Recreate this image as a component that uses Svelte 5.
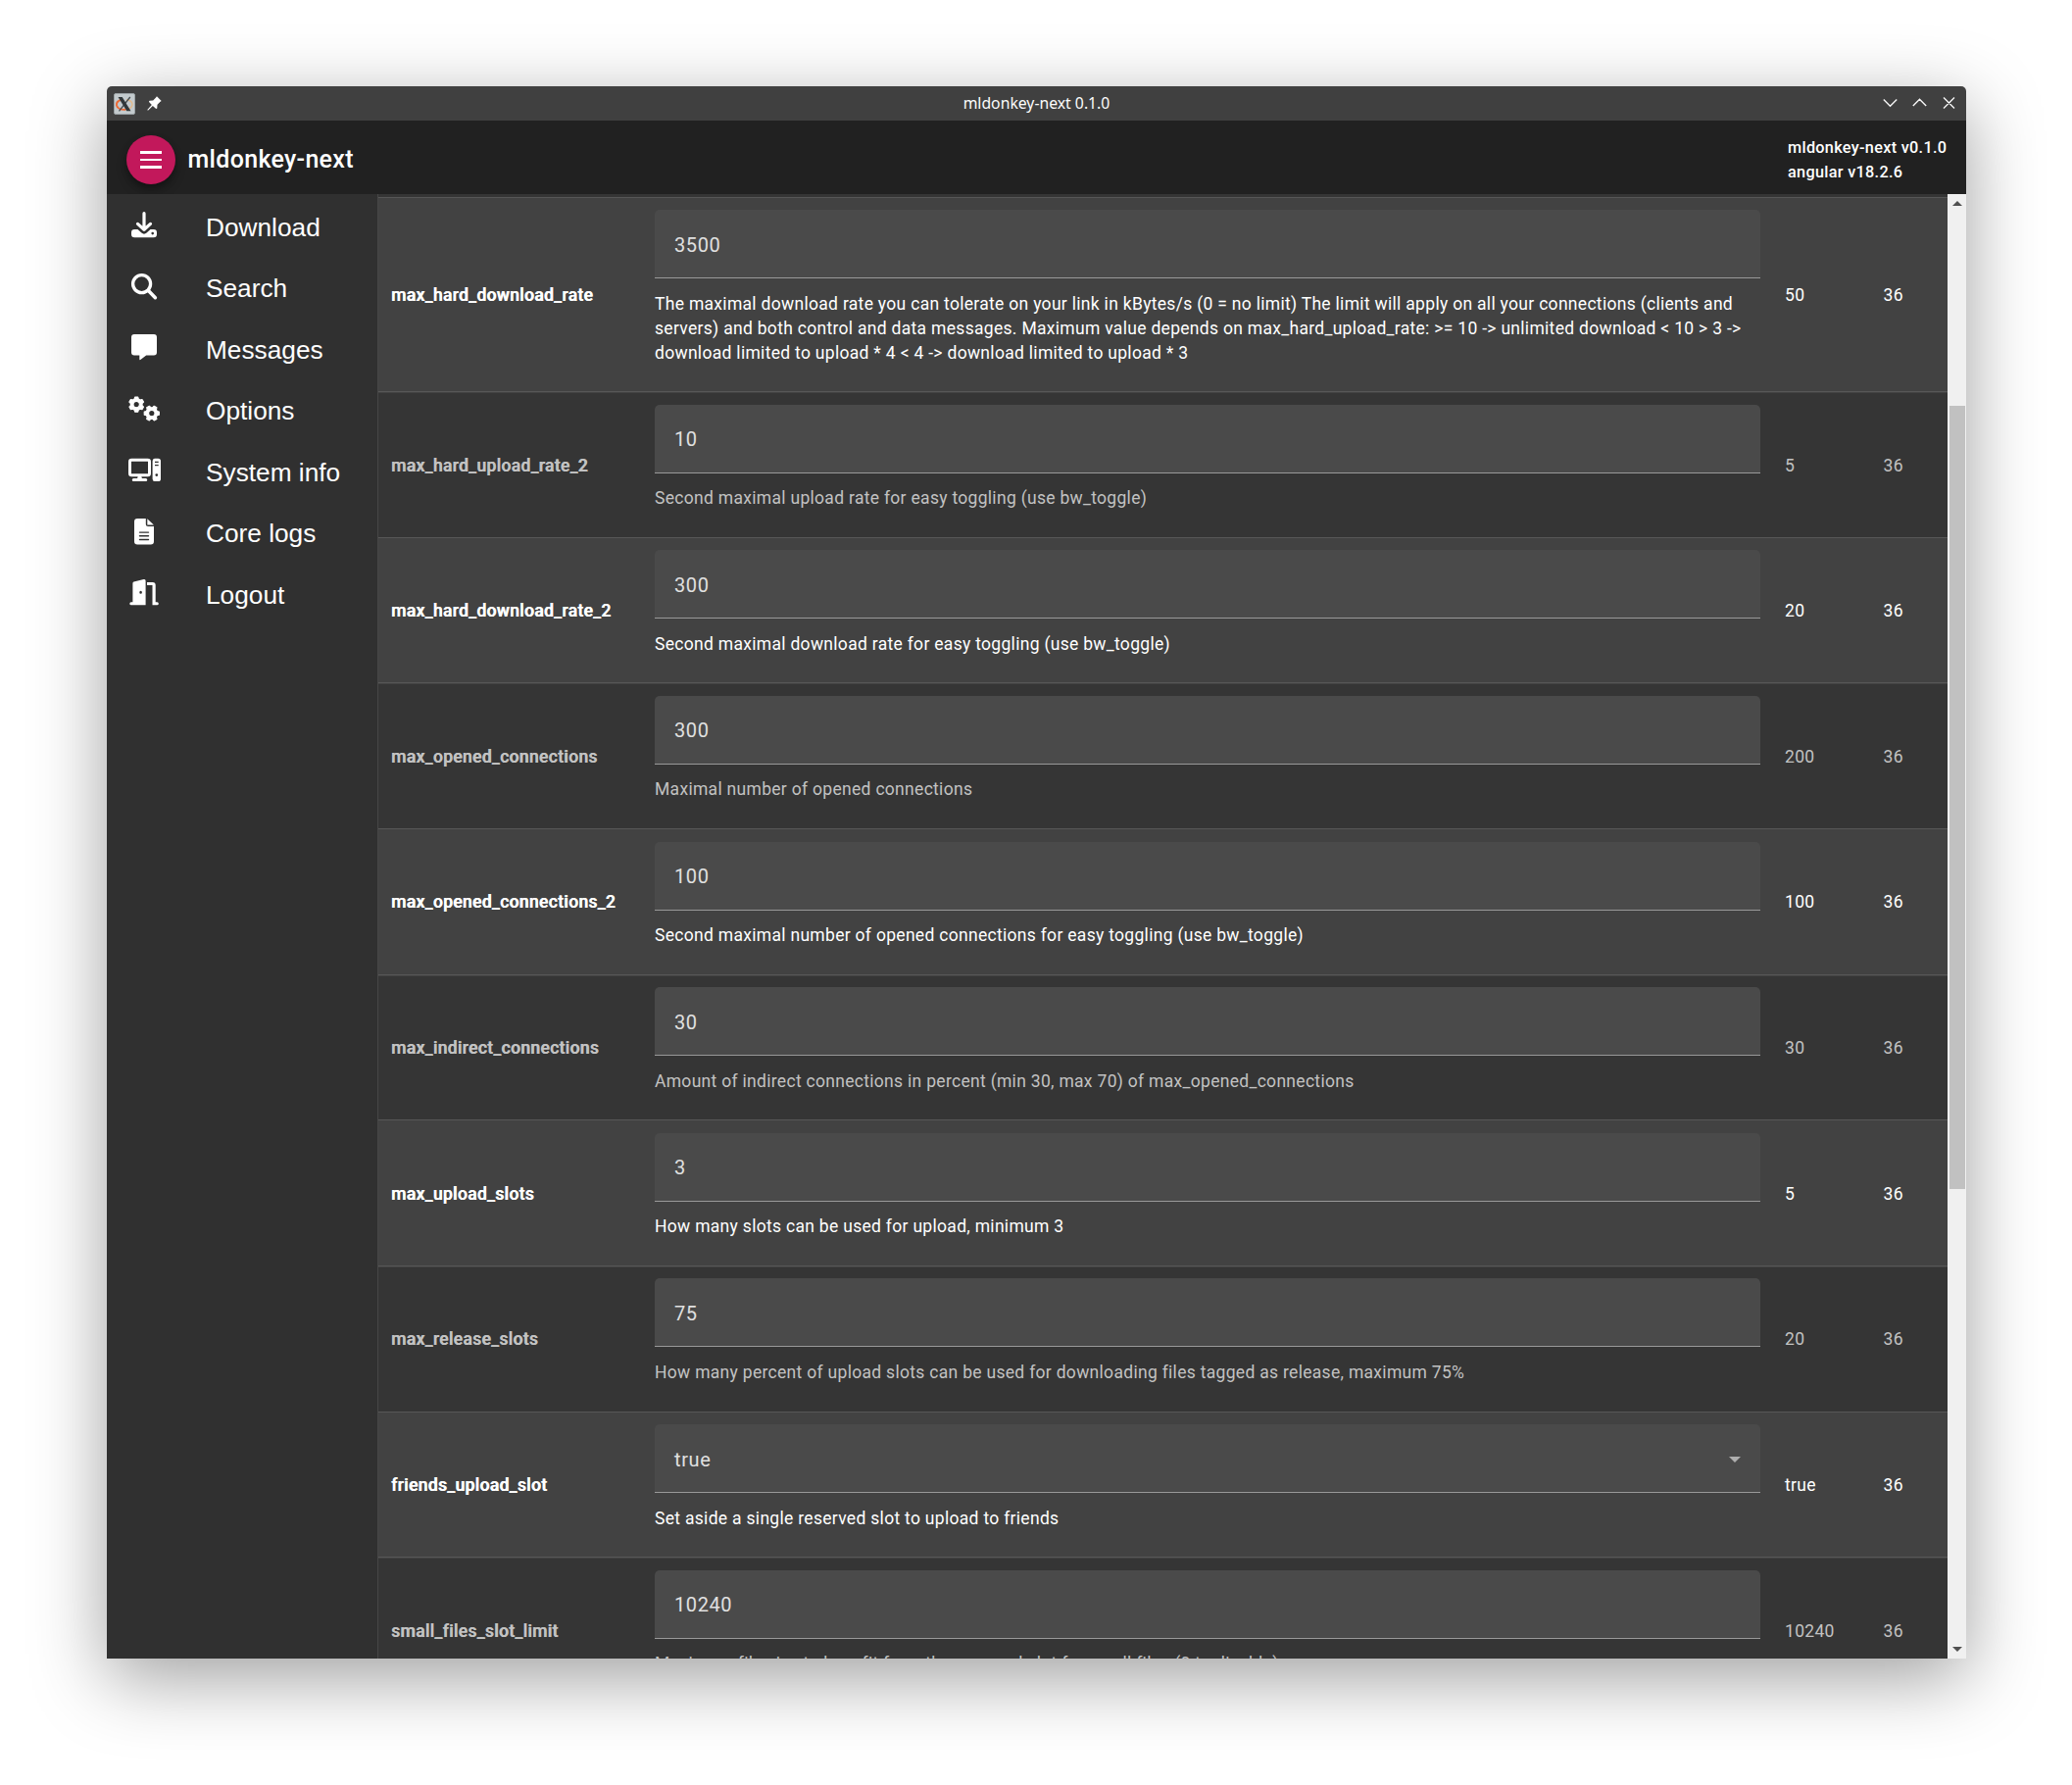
<script>
  const nav = [
    { id: 'download', label: 'Download' },
    { id: 'search', label: 'Search' },
    { id: 'messages', label: 'Messages' },
    { id: 'options', label: 'Options' },
    { id: 'system', label: 'System info' },
    { id: 'logs', label: 'Core logs' },
    { id: 'logout', label: 'Logout' },
  ];

  const options = [
    {
      name: 'max_hard_download_rate',
      value: '3500',
      lines: [
        'The maximal download rate you can tolerate on your link in kBytes/s (0 = no limit) The limit will apply on all your connections (clients and',
        'servers) and both control and data messages. Maximum value depends on max_hard_upload_rate: >= 10 -> unlimited download < 10 > 3 ->',
        'download limited to upload * 4 < 4 -> download limited to upload * 3',
      ],
      initial: '50',
    },
    { name: 'max_hard_upload_rate_2', value: '10', lines: ['Second maximal upload rate for easy toggling (use bw_toggle)'], initial: '5' },
    { name: 'max_hard_download_rate_2', value: '300', lines: ['Second maximal download rate for easy toggling (use bw_toggle)'], initial: '20' },
    { name: 'max_opened_connections', value: '300', lines: ['Maximal number of opened connections'], initial: '200' },
    { name: 'max_opened_connections_2', value: '100', lines: ['Second maximal number of opened connections for easy toggling (use bw_toggle)'], initial: '100' },
    { name: 'max_indirect_connections', value: '30', lines: ['Amount of indirect connections in percent (min 30, max 70) of max_opened_connections'], initial: '30' },
    { name: 'max_upload_slots', value: '3', lines: ['How many slots can be used for upload, minimum 3'], initial: '5' },
    { name: 'max_release_slots', value: '75', lines: ['How many percent of upload slots can be used for downloading files tagged as release, maximum 75%'], initial: '20' },
    { name: 'friends_upload_slot', value: 'true', select: true, lines: ['Set aside a single reserved slot to upload to friends'], initial: 'true' },
    { name: 'small_files_slot_limit', value: '10240', lines: ['Maximum file size to benefit from the reserved slot for small files (0 to disable)'], initial: '10240' },
  ];

  // Outline of a six-toothed cog centred on (cx, cy), as SVG path points.
  function cog(cx, cy, turn) {
    const pts = [];
    for (let i = 0; i < 6; i++) {
      const a = turn + (i * Math.PI) / 3;
      for (const [d, r] of [[-0.36, 5.9], [-0.2, 7.7], [0.2, 7.7], [0.36, 5.9]]) {
        pts.push(`${(cx + r * Math.cos(a + d)).toFixed(2)} ${(cy + r * Math.sin(a + d)).toFixed(2)}`);
      }
    }
    return `M${pts.join('L')}Z`;
  }
  const ring = (cx, cy, r) => `M${cx - r} ${cy}a${r} ${r} 0 1 0 ${2 * r} 0a${r} ${r} 0 1 0 ${-2 * r} 0Z`;
</script>

<div class="desktop">
  <div class="window">
    <div class="titlebar">
      <div class="tb-left">
        <svg class="xlogo" viewBox="0 0 22 22">
          <rect x=".5" y=".5" width="21" height="21" rx="1.5" fill="#c3cacd" stroke="#9aa1a4" />
          <path d="M8.5 6.5C4.500 7.500 2.500 10 3 12.500c.7 3 4.500 4.700 9 4.300" fill="none" stroke="#ec6a35" stroke-width="2" />
          <path d="M12 16.800c4.500-.5 7.500-2.800 7-5.800-.4-2.600-3-4-6-4.300" fill="none" stroke="#e3b98a" stroke-width="1.400" />
          <path d="M16.800 4 5.500 18.300" stroke="#444b4e" stroke-width="1.300" />
          <path d="M4.500 4h4.200l8.800 14.300h-4.200z" fill="#30373a" />
        </svg>
        <svg class="pin" viewBox="0 0 14 14">
          <path d="M9.300.3 13.700 4.600 12.600 5.400 9.800 8.200 9.600 11.600 8.600 12.200 5.500 9.300.9 13.700.3 13.100 4.500 8.300 1.700 5.400 2.400 4.500 5.800 4.200 8.500 1.500z" fill="#fff" />
        </svg>
      </div>
      <div class="tb-title">mldonkey-next 0.1.0</div>
      <svg class="tb-buttons" viewBox="0 0 76 16" fill="none" stroke="#f4f4f4" stroke-width="1.400">
        <path d="M.8 4.500 7.500 11.200 14.200 4.500M30.800 11 37.500 4.300 44.200 11M62 2.500 73 13.500M73 2.500 62 13.500" />
      </svg>
    </div>

    <header class="toolbar">
      <button class="menu" aria-label="Toggle menu">
        <span></span><span></span><span></span>
      </button>
      <div class="brand">mldonkey-next</div>
      <div class="versions">
        <div>mldonkey-next v0.1.0</div>
        <div>angular v18.2.6</div>
      </div>
    </header>

    <div class="body">
      <nav class="sidebar">
        {#each nav as item}
          <div class="nav-item">
            <svg class="nav-icon" viewBox="0 0 40 62" fill="#fff">
              {#if item.id === 'download'}
                <path fill-rule="evenodd" d="M10.300 34h3.200l3.900 3.600q2.600 2.200 5.200 0l3.900-3.600h3.200Q33 34 33 37.200v1.900Q33 42.300 29.700 42.300H10.300Q7 42.300 7 39.100v-1.900Q7 34 10.300 34zM27.400 38.100a1.300 1.300 0 1 0 2.600 0a1.300 1.300 0 1 0-2.600 0z" />
                <path d="M20 17.700V34M13.500 28.400 20 34.300 26.500 28.400" fill="none" stroke="#fff" stroke-width="3.200" stroke-linecap="round" stroke-linejoin="round" />
              {:else if item.id === 'search'}
                <circle cx="17.600" cy="26.600" r="9" fill="none" stroke="#fff" stroke-width="3.300" />
                <path d="M24.200 33.200 31.400 40.700" fill="none" stroke="#fff" stroke-width="3.500" stroke-linecap="round" />
              {:else if item.id === 'messages'}
                <path d="M10 16H30Q33 16 33 19V34.600Q33 37.600 30 37.600H22.200L16.300 42.100Q15.300 42.500 15.300 41.400V37.600H10Q7 37.600 7 34.600V19Q7 16 10 16z" />
              {:else if item.id === 'options'}
                <path fill-rule="evenodd" stroke="#fff" stroke-width="1.200" stroke-linejoin="round" d={cog(12.2, 24.6, Math.PI / 6) + ring(12.2, 24.6, 3.2)} />
                <path fill-rule="evenodd" stroke="#fff" stroke-width="1.200" stroke-linejoin="round" d={cog(27.8, 33.6, 0) + ring(27.8, 33.6, 3.2)} />
              {:else if item.id === 'system'}
                <rect x="5.500" y="19.200" width="20" height="15.600" rx="1.800" fill="none" stroke="#fff" stroke-width="3" />
                <path d="M13.700 36h3.600l.6 2h3.800a1.500 1.500 0 0 1 0 3.100H9.300a1.500 1.500 0 0 1 0-3.100h3.800z" />
                <path fill-rule="evenodd" d="M30.800 17.700h3.600Q37 17.700 37 20.300v18.200Q37 41.100 34.400 41.100H30.800Q28.600 41.100 28.600 38.500V20.300Q28.600 17.700 30.800 17.700zM31 20.800v1.200h3.700v-1.200zM31 24v1.200h3.700v-1.200zM31.400 34.600a1.400 1.400 0 1 0 2.800 0a1.400 1.400 0 1 0-2.800 0z" />
              {:else if item.id === 'logs'}
                <path fill-rule="evenodd" d="M13.200 16H21.800V21.500Q21.800 24 24.300 24H30V39.300Q30 42.500 26.800 42.500H13.200Q10 42.500 10 39.300V19.200Q10 16 13.200 16zM15.500 29.400a.7.7 0 0 0 0 1.400h9a.7.7 0 0 0 0-1.400zM15.500 33.100a.7.7 0 0 0 0 1.400h9a.7.7 0 0 0 0-1.400zM15.500 36.800a.7.7 0 0 0 0 1.400h9a.7.7 0 0 0 0-1.400z" />
                <path d="M23.300 16.200 29.900 22.600H23.300z" />
              {:else}
                <path fill-rule="evenodd" d="M9.500 18.600 19.600 16.100Q21.600 15.700 21.600 17.600V42.300H6.800a1.500 1.500 0 0 1 0-3H8.400V20.400Q8.400 18.900 9.500 18.600zM15.300 29.300a1.300 1.500 0 1 0 2.600 0a1.300 1.500 0 1 0-2.600 0z" />
                <path d="M23 18.900H28.700Q31.700 18.900 31.700 21.900V39.300H33.300a1.500 1.500 0 0 1 0 3H28.500V22.100H23z" />
              {/if}
            </svg>
            <span>{item.label}</span>
          </div>
        {/each}
      </nav>

      <main class="content">
        <div class="table">
          {#each options as o, i}
            <div class="row" class:tall={o.lines.length > 1} class:dim={i % 2 === 1}>
              <div class="name">{o.name}</div>
              <div class="value">
                <div class="field">
                  <span>{o.value}</span>
                  {#if o.select}<i class="caret"></i>{/if}
                </div>
                <div class="hint">
                  {#each o.lines as line}<div>{line}</div>{/each}
                </div>
              </div>
              <div class="initial">{o.initial}</div>
              <div class="level">36</div>
            </div>
          {/each}
        </div>
        <div class="scrollbar">
          <i class="up"></i>
          <div class="thumb"></div>
          <i class="down"></i>
        </div>
      </main>
    </div>
  </div>
</div>

<style>
  :global(body) {
    background: #fff;
  }
  .desktop {
    box-sizing: border-box;
    width: 2114px;
    height: 1821px;
    padding: 88px 108px 129px 109px;
    overflow: hidden;
    font-family: Roboto, sans-serif;
  }
  .window {
    width: 1897px;
    height: 1604px;
    display: flex;
    flex-direction: column;
    overflow: hidden;
    border-radius: 5px 5px 0 0;
    box-shadow: 0 20px 76px rgba(0, 0, 0, 0.38);
  }
  .titlebar {
    flex: none;
    height: 35px;
    display: grid;
    grid-template-columns: 1fr auto 1fr;
    align-items: center;
    background: #404040;
    color: #fcfcfc;
  }
  .tb-left {
    display: flex;
    align-items: center;
    gap: 12px;
    padding-left: 7px;
  }
  .xlogo {
    width: 22px;
    height: 22px;
  }
  .pin {
    width: 15px;
    height: 15px;
    margin-bottom: 1px;
  }
  .tb-title {
    padding-bottom: 1px;
    font: 15.750px/34px 'Noto Sans', sans-serif;
    white-space: nowrap;
  }
  .tb-buttons {
    justify-self: end;
    width: 76px;
    height: 16px;
    margin-right: 9px;
    margin-bottom: 1px;
  }
  .toolbar {
    flex: none;
    height: 75px;
    display: flex;
    align-items: center;
    padding: 0 20px;
    box-sizing: border-box;
    background: #212121;
    color: #fff;
    font-weight: 500;
    white-space: nowrap;
  }
  .menu {
    width: 50px;
    height: 50px;
    margin-top: 5px;
    padding: 0;
    border: 0;
    border-radius: 50%;
    background: #c2185b;
    display: flex;
    flex-direction: column;
    align-items: center;
    justify-content: center;
    gap: 5px;
    box-shadow: 0 4px 6px rgba(0, 0, 0, 0.25), 0 7px 12px rgba(0, 0, 0, 0.2);
  }
  .menu span {
    width: 22px;
    height: 2.500px;
    background: #fff;
  }
  .brand {
    margin-left: 12.500px;
    padding-top: 4px;
    font-size: 25px;
    letter-spacing: 0.310px;
  }
  .versions {
    width: 162px;
    margin-left: auto;
    padding-top: 4px;
    font-size: 16.250px;
    line-height: 25px;
    letter-spacing: 0.300px;
  }
  .body {
    flex: 1;
    min-height: 0;
    display: flex;
    background: #303030;
  }
  .sidebar {
    width: 276px;
    flex: none;
    padding-top: 2px;
    border-right: 1px solid #464646;
    box-sizing: content-box;
    color: #fff;
    font: 26.250px 'Liberation Sans', sans-serif;
  }
  .nav-item {
    height: 62.500px;
    display: flex;
    align-items: center;
    padding-left: 18px;
  }
  .nav-item span {
    padding-top: 2px;
  }
  .nav-icon {
    width: 40px;
    height: 62px;
    margin-right: 43px;
  }
  .content {
    flex: 1;
    min-width: 0;
    display: flex;
    overflow: hidden;
  }
  .table {
    flex: 1;
    min-width: 0;
    padding-top: 2.600px;
    background: #353535;
    overflow: hidden;
  }
  .row {
    box-sizing: border-box;
    height: 148.640px;
    display: grid;
    grid-template-columns: 269px 1128px 13px 12px 100.500px 1fr;
    border-top: 1px solid #575757;
    background: #424242;
    color: #fff;
    padding-left: 13px;
    font-size: 17.500px;
    letter-spacing: 0.300px;
  }
  .row.tall {
    height: 198.600px;
  }
  .row.dim {
    background: #353535;
    color: #c2c2c2;
    box-shadow: inset 0 1px #424242;
  }
  .name,
  .initial,
  .level {
    align-self: center;
    padding-top: 1px;
  }
  .name {
    font-weight: 500;
    text-shadow: 0.600px 0 currentColor;
    letter-spacing: 0.330px;
  }
  .initial {
    grid-column: 5;
  }
  .value {
    padding-top: 12.500px;
  }
  .field {
    box-sizing: border-box;
    height: 70px;
    padding: 2px 20px 0;
    display: flex;
    align-items: center;
    justify-content: space-between;
    background: #4a4a4a;
    border-bottom: 1px solid #999;
    border-radius: 5px 5px 0 0;
    color: #e0e0e0;
    font-size: 20px;
    letter-spacing: 0.600px;
  }
  .caret {
    border: 6px solid transparent;
    border-top-color: #aeaeae;
    border-bottom: 0;
  }
  .hint {
    padding-top: 13.500px;
    line-height: 25px;
    white-space: nowrap;
  }
  .scrollbar {
    width: 19px;
    flex: none;
    display: flex;
    flex-direction: column;
    align-items: center;
    background: #f0f0f0;
  }
  .up,
  .down {
    border: 5px solid transparent;
  }
  .up {
    margin-top: 7px;
    border-top: 0;
    border-bottom-color: #505050;
  }
  .thumb {
    width: 16px;
    height: 799px;
    margin-top: 204px;
    background: #c1c1c1;
  }
  .down {
    margin: auto 0 7px;
    border-bottom: 0;
    border-top-color: #505050;
  }
</style>
